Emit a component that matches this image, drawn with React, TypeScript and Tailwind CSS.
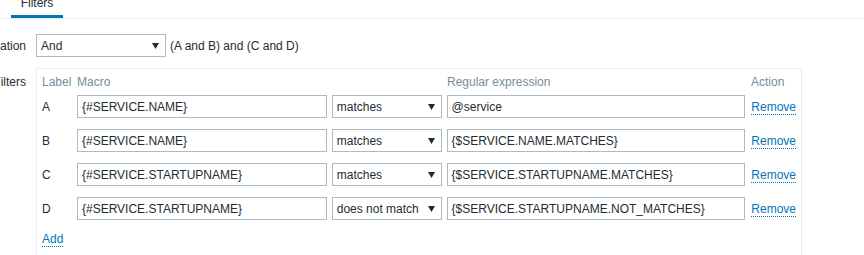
import React from "react";

interface FilterRow {
  label: string;
  macro: string;
  operator: string;
  value: string;
}

const rows: FilterRow[] = [
  { label: "A", macro: "{#SERVICE.NAME}", operator: "matches", value: "@service" },
  { label: "B", macro: "{#SERVICE.NAME}", operator: "matches", value: "{$SERVICE.NAME.MATCHES}" },
  { label: "C", macro: "{#SERVICE.STARTUPNAME}", operator: "matches", value: "{$SERVICE.STARTUPNAME.MATCHES}" },
  { label: "D", macro: "{#SERVICE.STARTUPNAME}", operator: "does not match", value: "{$SERVICE.STARTUPNAME.NOT_MATCHES}" },
];

const Arrow = () => (
  <svg width="7" height="6" viewBox="0 0 7 6" className="shrink-0">
    <polygon points="0,0 7,0 3.5,6" fill="#1f2c33" />
  </svg>
);

const Select = ({ value, className }: { value: string; className: string }) => (
  <div
    className={`flex h-[23px] items-center justify-between border border-[#acbbc2] bg-white pl-[4px] pr-[6px] ${className}`}
  >
    <span className="whitespace-nowrap">{value}</span>
    <Arrow />
  </div>
);

const Input = ({ value, className }: { value: string; className: string }) => (
  <div className={`flex h-[23px] items-center border border-[#acbbc2] bg-white px-[4px] ${className}`}>
    <span className="whitespace-nowrap">{value}</span>
  </div>
);

const Link = ({ children }: { children: React.ReactNode }) => (
  <span className="cursor-pointer border-b border-dotted border-[#0275b8] text-[#0275b8]">{children}</span>
);

const FormLabel = ({ children, className = "" }: { children: React.ReactNode; className?: string }) => (
  <div className={`flex w-[26px] shrink-0 justify-end overflow-hidden ${className}`}>
    <span className="shrink-0 whitespace-nowrap">{children}</span>
  </div>
);

export default function App() {
  return (
    <div
      className="h-[255px] w-[864px] overflow-hidden bg-white text-[12px] leading-[14px] text-[#1f2c33]"
      style={{ fontFamily: '"Liberation Sans", Arial, sans-serif' }}
    >
      {/* tabs */}
      <div className="flex h-[19px] border-b border-[#ebeef0]">
        <div className="ml-[11px] flex h-[18px] w-[52px] items-end justify-center border-b-[3px] border-[#0275b8] pb-[5px]">
          <span>Filters</span>
        </div>
      </div>

      {/* calculation */}
      <div className="mt-[15px] flex items-center gap-[10px]">
        <FormLabel>Type of calculation</FormLabel>
        <Select value="And" className="w-[130px]" />
        <span className="ml-[-6px]">(A and B) and (C and D)</span>
      </div>

      {/* filters */}
      <div className="mt-[11px] flex gap-[10px]">
        <FormLabel className="pt-[7px]">Filters</FormLabel>
        <div className="w-[766px] border border-[#ebeef0] pl-[5px] pr-[5px] pt-[6px] pb-[20px]">
          <div className="mb-[6px] flex gap-[5px] text-[#768d99]">
            <div className="w-[30px]">Label</div>
            <div className="w-[250px]">Macro</div>
            <div className="w-[110px]" />
            <div className="w-[299px]">Regular expression</div>
            <div>Action</div>
          </div>
          <div className="flex flex-col gap-[11px]">
            {rows.map((row) => (
              <div key={row.label} className="flex items-center gap-[5px]">
                <div className="w-[30px]">{row.label}</div>
                <Input value={row.macro} className="w-[250px]" />
                <Select value={row.operator} className="w-[110px]" />
                <Input value={row.value} className="w-[299px]" />
                <div className="pl-[1px]">
                  <Link>Remove</Link>
                </div>
              </div>
            ))}
          </div>
          <div className="mt-[12px]">
            <Link>Add</Link>
          </div>
        </div>
      </div>
    </div>
  );
}
